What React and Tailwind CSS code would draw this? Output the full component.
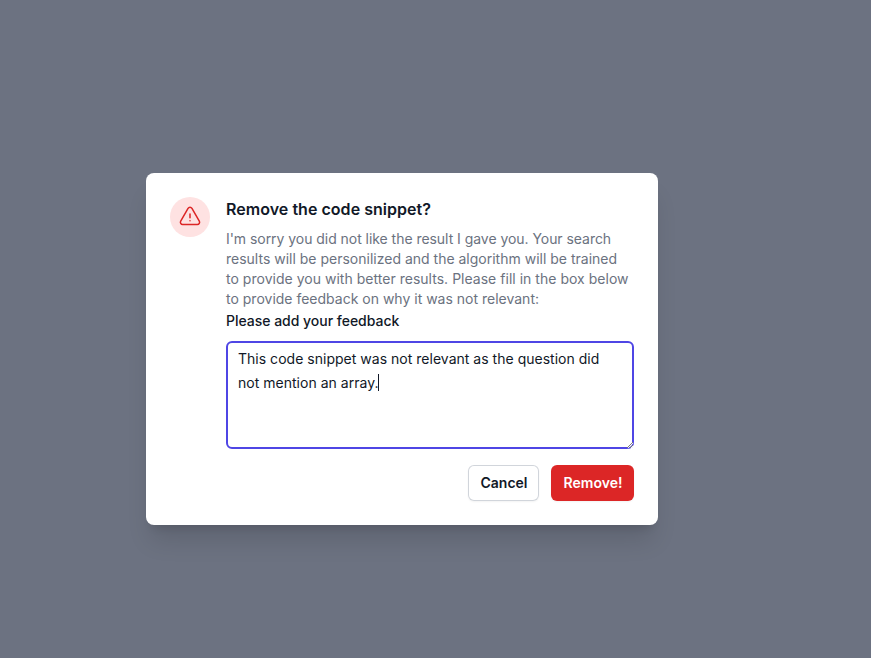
export default function App() {
  return (
    <main className="h-[658px] w-[871px] overflow-hidden bg-[#6c7281] pl-[146px] pt-[173px] font-['Inter',sans-serif] antialiased">
      <section role="dialog" className="flex h-[352px] w-[512px] gap-4 rounded-lg bg-white p-6 shadow-[0_20px_25px_-5px_rgb(0_0_0/0.12),0_8px_10px_-6px_rgb(0_0_0/0.12)]">
        <div className="flex size-10 shrink-0 items-center justify-center rounded-full bg-[#fee2e2]">
          <svg className="size-6 text-[#dc2626]" viewBox="0 0 24 24" fill="none" stroke="currentColor" strokeWidth="1.5" strokeLinecap="round" strokeLinejoin="round">
            <path d="M12 9v3.75m-9.303 3.376c-.866 1.5.217 3.374 1.948 3.374h14.71c1.73 0 2.813-1.874 1.948-3.374L13.949 3.378c-.866-1.5-3.032-1.5-3.898 0L2.697 16.126ZM12 15.75h.007v.008H12v-.008Z" />
          </svg>
        </div>
        <div className="w-[408px]">
          <h3 className="text-base leading-6 font-semibold tracking-[0.035px] text-[#111827]">Remove the code snippet?</h3>
          <p className="mt-2 text-sm leading-5 whitespace-nowrap text-[#6b7280]">
            <span className="tracking-[-0.045px]">I'm sorry you did not like the result I gave you. Your search</span><br />
            results will be personilized and the algorithm will be trained<br />
            <span className="tracking-[0.022px]">to provide you with better results. Please fill in the box below</span><br />
            to provide feedback on why it was not relevant:
          </p>
          <label htmlFor="feedback" className="block text-sm leading-6 font-medium tracking-[-0.02px] text-[#111827]">Please add your feedback</label>
          <div className="relative mt-2">
            <textarea
              id="feedback"
              className="block h-[108px] w-full resize-none rounded-md border-2 border-[#4f46e5] bg-white px-2.5 py-1 text-sm leading-6 tracking-[0.018px] text-[#111827] outline-none"
              defaultValue="This code snippet was not relevant as the question did not mention an array."
            />
            <span className="absolute top-[33px] left-[152px] h-[17px] w-px bg-[#111827]" />
            <svg className="absolute right-0 bottom-0 size-2" viewBox="0 0 8 8" fill="none">
              <path d="M1.5 7 7 1.5M4.5 7 7 4.5" stroke="white" strokeWidth="1.4" />
              <path d="M1 7 7 1M4 7 7 4" stroke="#444" strokeWidth=".7" />
            </svg>
          </div>
          <div className="mt-4 flex justify-end gap-3">
            <button className="h-9 w-[71px] rounded-md bg-white pl-px text-sm font-semibold text-[#111827] shadow-xs ring-1 ring-[#d1d5db] ring-inset">Cancel</button>
            <button className="h-9 w-[83px] rounded-md bg-[#dc2626] pl-px text-sm font-semibold text-white shadow-xs">Remove!</button>
          </div>
        </div>
      </section>
    </main>
  );
}
